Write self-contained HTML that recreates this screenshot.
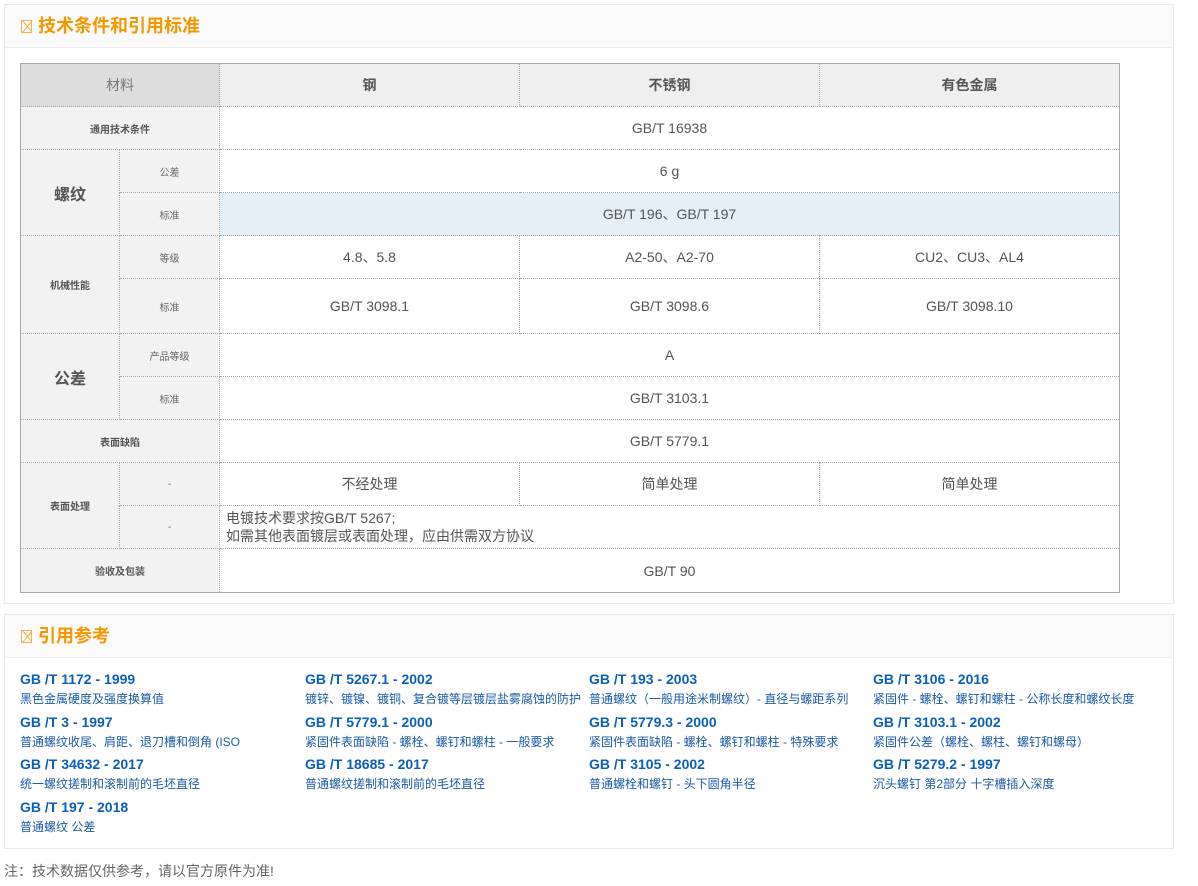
<!DOCTYPE html>
<html><head><meta charset="utf-8"><style>
*{box-sizing:border-box;margin:0;padding:0}
body{width:1198px;height:886px;background:#fff;font-family:"Liberation Sans","Noto Sans CJK SC",sans-serif;color:#555;position:relative;overflow:hidden}
.panel{position:absolute;left:4px;width:1170px;border:1px solid #e8e8e8;background:#fff}
.ph{height:43px;background:#fafafa;border-bottom:1px solid #eee;padding-left:16px;line-height:43px;color:#f39800;font-size:18px;font-weight:bold}
.ph i{display:inline-block;width:11px;height:13px;border:1px solid #f6b04a;margin-right:6px;vertical-align:-1px;position:relative;overflow:hidden}
.ph i:before,.ph i:after{content:"";position:absolute;left:-3px;top:5px;width:17px;height:1px;background:#f6b04a;transform:rotate(50deg)}
.ph i:after{transform:rotate(-50deg)}
table{position:absolute;left:15px;top:58px;border-collapse:collapse;border:1px solid #aaa;table-layout:fixed}
td{border:1px dotted #aaa;text-align:center;font-size:14px;color:#555}
td.l{background:#f2f2f2;font-size:10px;color:#555;font-weight:bold}
td.s{background:#f2f2f2;font-size:10px;color:#666}
td.b{background:#f2f2f2;font-size:16px;font-weight:bold;color:#555}
tr.h td{background:#efefef;font-weight:bold;border-bottom:1px dotted #aaa;border-left:1px dotted #ccc}
tr.h td.m{background:#ddd;font-weight:normal;color:#777}
.refs{position:absolute;left:15px;top:14px}
.ref{position:absolute;width:285px}
.ref b{display:block;color:#0c5fb8;font-size:14px;line-height:17px}
.ref span{display:block;font-size:12px;color:#1a5aa6;line-height:17px;margin-top:3px;white-space:nowrap}
.note{position:absolute;left:4px;top:861px;font-size:14px;color:#666}
</style></head><body>
<div class="panel" style="top:4px;height:600px">
<div class="ph"><i></i>技术条件和引用标准</div>
<table>
<colgroup><col style="width:99px"><col style="width:100px"><col style="width:300px"><col style="width:300px"><col style="width:300px"></colgroup>
<tr class="h" style="height:43px"><td class="m" colspan="2">材料</td><td>钢</td><td>不锈钢</td><td>有色金属</td></tr>
<tr style="height:43px"><td class="l" colspan="2">通用技术条件</td><td colspan="3">GB/T 16938</td></tr>
<tr style="height:43px"><td class="b" rowspan="2">螺纹</td><td class="s">公差</td><td colspan="3">6 g</td></tr>
<tr style="height:43px"><td class="s">标准</td><td colspan="3" style="background:#e4eff7">GB/T 196、GB/T 197</td></tr>
<tr style="height:43px"><td class="l" rowspan="2">机械性能</td><td class="s">等级</td><td>4.8、5.8</td><td>A2-50、A2-70</td><td>CU2、CU3、AL4</td></tr>
<tr style="height:55px"><td class="s">标准</td><td>GB/T 3098.1</td><td>GB/T 3098.6</td><td>GB/T 3098.10</td></tr>
<tr style="height:43px"><td class="b" rowspan="2">公差</td><td class="s">产品等级</td><td colspan="3">A</td></tr>
<tr style="height:43px"><td class="s">标准</td><td colspan="3">GB/T 3103.1</td></tr>
<tr style="height:43px"><td class="l" colspan="2">表面缺陷</td><td colspan="3">GB/T 5779.1</td></tr>
<tr style="height:43px"><td class="l" rowspan="2">表面处理</td><td class="s">-</td><td>不经处理</td><td>简单处理</td><td>简单处理</td></tr>
<tr style="height:43px"><td class="s">-</td><td colspan="3" style="text-align:left;padding-left:6px;line-height:18px">电镀技术要求按GB/T 5267;<br>如需其他表面镀层或表面处理，应由供需双方协议</td></tr>
<tr style="height:44px"><td class="l" colspan="2">验收及包装</td><td colspan="3">GB/T 90</td></tr>
</table>
</div>
<div class="panel" style="top:614px;height:235px">
<div class="ph"><i></i>引用参考</div>
<div style="position:relative">
<div class="ref" style="left:15px;top:13px"><b>GB /T 1172 - 1999</b><span>黑色金属硬度及强度换算值</span></div>
<div class="ref" style="left:300px;top:13px"><b>GB /T 5267.1 - 2002</b><span>镀锌、镀镍、镀铜、复合镀等层镀层盐雾腐蚀的防护</span></div>
<div class="ref" style="left:584px;top:13px"><b>GB /T 193 - 2003</b><span>普通螺纹（一般用途米制螺纹）- 直径与螺距系列</span></div>
<div class="ref" style="left:868px;top:13px"><b>GB /T 3106 - 2016</b><span>紧固件 - 螺栓、螺钉和螺柱 - 公称长度和螺纹长度</span></div>
<div class="ref" style="left:15px;top:56px"><b>GB /T 3 - 1997</b><span>普通螺纹收尾、肩距、退刀槽和倒角 (ISO</span></div>
<div class="ref" style="left:300px;top:56px"><b>GB /T 5779.1 - 2000</b><span>紧固件表面缺陷 - 螺栓、螺钉和螺柱 - 一般要求</span></div>
<div class="ref" style="left:584px;top:56px"><b>GB /T 5779.3 - 2000</b><span>紧固件表面缺陷 - 螺栓、螺钉和螺柱 - 特殊要求</span></div>
<div class="ref" style="left:868px;top:56px"><b>GB /T 3103.1 - 2002</b><span>紧固件公差（螺栓、螺柱、螺钉和螺母）</span></div>
<div class="ref" style="left:15px;top:98px"><b>GB /T 34632 - 2017</b><span>统一螺纹搓制和滚制前的毛坯直径</span></div>
<div class="ref" style="left:300px;top:98px"><b>GB /T 18685 - 2017</b><span>普通螺纹搓制和滚制前的毛坯直径</span></div>
<div class="ref" style="left:584px;top:98px"><b>GB /T 3105 - 2002</b><span>普通螺栓和螺钉 - 头下圆角半径</span></div>
<div class="ref" style="left:868px;top:98px"><b>GB /T 5279.2 - 1997</b><span>沉头螺钉 第2部分 十字槽插入深度</span></div>
<div class="ref" style="left:15px;top:141px"><b>GB /T 197 - 2018</b><span>普通螺纹 公差</span></div>
</div>
</div>
<div class="note">注：技术数据仅供参考，请以官方原件为准!</div>
</body></html>
